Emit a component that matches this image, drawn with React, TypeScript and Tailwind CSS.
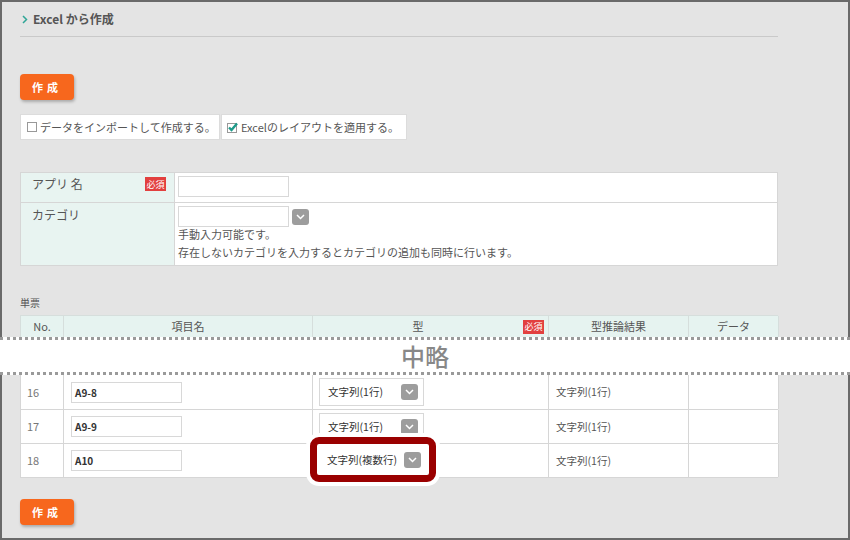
const Chevron = () => (
  <span className="flex h-[16px] w-[17px] items-center justify-center rounded-[3px] bg-[#9d9d9d]">
    <svg width="9" height="6" viewBox="0 0 9 6" fill="none">
      <path d="M1 1l3.5 3.5L8 1" stroke="#fff" strokeWidth="1.5" />
    </svg>
  </span>
)

const Badge = () => (
  <span className="flex h-[14px] w-[21px] items-center justify-center bg-[#e2403f] text-[9px] leading-none text-white">必須</span>
)

const OrangeButton = ({ className }: { className: string }) => (
  <button className={`h-[26px] w-[54px] rounded-[4px] bg-[#f7671d] text-[11px] font-bold tracking-[4px] text-white shadow-[1px_2px_3px_rgba(0,0,0,0.25)] ${className}`}>
    作成
  </button>
)

const rows = [
  { no: "16", name: "A9-8", type: "文字列(1行)", h: "h-[35px]" },
  { no: "17", name: "A9-9", type: "文字列(1行)", h: "h-[34px]" },
]

const App = () => {
  return (
    <div className="flex h-[540px] w-[850px] flex-col border-2 border-[#6a6a6a] bg-[#e4e4e4] px-[18px] font-['Noto_Sans_CJK_JP',sans-serif] text-[#555]">
      <div className="w-[758px]">
        {/* title */}
        <div className="flex items-center gap-[5px] border-b border-[#c9c9c9] pb-[9px] pt-[9px] pl-[2px]">
          <svg width="6" height="9" viewBox="0 0 6 9" fill="none">
            <path d="M1 1l3.5 3.5L1 8" stroke="#2fa596" strokeWidth="1.5" />
          </svg>
          <span className="text-[12px] font-bold leading-[16px] text-[#555]">Excel から作成</span>
        </div>

        <OrangeButton className="mt-[37px]" />

        {/* options */}
        <div className="mt-[14px] flex h-[26px] text-[11px]">
          <div className="flex w-[200px] items-center gap-[3px] border border-[#dcdcdc] bg-white pl-[6px]">
            <span className="h-[10px] w-[10px] border border-[#999] bg-white" />
            <span>データをインポートして作成する。</span>
          </div>
          <div className="ml-[1px] flex w-[186px] items-center gap-[3px] border border-[#dcdcdc] bg-white pl-[5px]">
            <svg width="11" height="11" viewBox="0 0 11 11">
              <rect x="0.5" y="1.5" width="9" height="9" fill="#fff" stroke="#999" />
              <path d="M2 5.5l2.5 2.5L10 1.5" stroke="#1d9a8a" strokeWidth="2.4" fill="none" />
            </svg>
            <span>Excelのレイアウトを適用する。</span>
          </div>
        </div>

        {/* app form */}
        <div className="mt-[32px] border border-[#d6d6d6] bg-white text-[12px]">
          <div className="flex h-[30px] border-b border-[#d6d6d6]">
            <div className="flex w-[154px] items-start justify-between border-r border-[#d6d6d6] bg-[#e8f4f1] pl-[11px] pr-[8px] pt-[3px]">
              <span className="leading-[16px]">アプリ 名</span>
              <span className="mt-[1px]"><Badge /></span>
            </div>
            <div className="pl-[3px] pt-[3px]">
              <div className="h-[21px] w-[111px] border border-[#d8d8d8] bg-white" />
            </div>
          </div>
          <div className="flex h-[62px]">
            <div className="w-[154px] border-r border-[#d6d6d6] bg-[#e8f4f1] pl-[11px] pt-[4px] leading-[16px]">カテゴリ</div>
            <div className="pl-[3px] pt-[3px] text-[11px]">
              <div className="flex items-center gap-[3px]">
                <div className="h-[21px] w-[111px] border border-[#d8d8d8] bg-white" />
                <Chevron />
              </div>
              <div className="-mt-[2px] leading-[18px]">手動入力可能です。</div>
              <div className="leading-[18px]">存在しないカテゴリを入力するとカテゴリの追加も同時に行います。</div>
            </div>
          </div>
        </div>

        <div className="mt-[30px] text-[10px] leading-[14px]">単票</div>

        {/* table header */}
        <div className="mt-[5px] grid h-[22px] grid-cols-[43px_249px_236px_140px_90px] border-l border-t border-[#d6dedc] bg-[#e6f3f0] text-[11px]">
          <div className="flex items-center justify-center border-r border-[#d6dedc]">No.</div>
          <div className="flex items-center justify-center border-r border-[#d6dedc]">項目名</div>
          <div className="flex items-center border-r border-[#d6dedc] pr-[4px]">
            <span className="flex-1 text-center">型</span>
            <Badge />
          </div>
          <div className="flex items-center justify-center border-r border-[#d6dedc]">型推論結果</div>
          <div className="flex items-center justify-center border-r border-[#d6dedc]">データ</div>
        </div>
      </div>

      {/* omission band */}
      <div className="-mx-[20px] flex h-[38px] items-center justify-center border-y-[3px] border-dotted border-[#9a9a9a] bg-white text-[24px] font-medium text-[#888]">
        中略
      </div>

      {/* table rows */}
      <div className="w-[758px] border-l border-[#d6d6d6] bg-white text-[10.5px]">
        {rows.map((r) => (
          <div key={r.no} className={`grid ${r.h} grid-cols-[43px_249px_236px_140px_90px] border-b border-[#d6d6d6]`}>
            <div className="flex items-center border-r border-[#d6d6d6] pl-[6px] text-[11px] text-[#777]">{r.no}</div>
            <div className="flex items-center border-r border-[#d6d6d6] pl-[7px]">
              <div className="flex h-[21px] w-[111px] items-center border border-[#d8d8d8] pl-[3px] text-[10px] font-semibold text-[#333]">{r.name}</div>
            </div>
            <div className="flex items-center border-r border-[#d6d6d6] pl-[6px]">
              <div className="flex h-[28px] w-[105px] items-center justify-between border border-[#d8d8d8] pl-[8px] pr-[5px] text-[#333]">
                <span>{r.type}</span>
                <Chevron />
              </div>
            </div>
            <div className="flex items-center border-r border-[#d6d6d6] pl-[7px]">文字列(1行)</div>
            <div className="border-r border-[#d6d6d6]" />
          </div>
        ))}
        <div className="grid h-[34px] grid-cols-[43px_249px_236px_140px_90px] border-b border-[#d6d6d6]">
          <div className="flex items-center border-r border-[#d6d6d6] pl-[6px] text-[11px] text-[#777]">18</div>
          <div className="flex items-center border-r border-[#d6d6d6] pl-[7px]">
            <div className="flex h-[21px] w-[111px] items-center border border-[#d8d8d8] pl-[3px] text-[10px] font-semibold text-[#333]">A10</div>
          </div>
          <div className="relative border-r border-[#d6d6d6]">
            <div className="absolute left-[-3px] top-[-7px] flex h-[45px] w-[126px] items-center justify-between rounded-[9px] border-[7px] border-[#9a0000] bg-white pl-[10px] pr-[8px] text-[#333] shadow-[0_0_0_4px_#fff]">
              <span>文字列(複数行)</span>
              <Chevron />
            </div>
          </div>
          <div className="flex items-center border-r border-[#d6d6d6] pl-[7px]">文字列(1行)</div>
          <div className="border-r border-[#d6d6d6]" />
        </div>
      </div>

      <OrangeButton className="mt-[21px]" />
    </div>
  )
}

export default App
